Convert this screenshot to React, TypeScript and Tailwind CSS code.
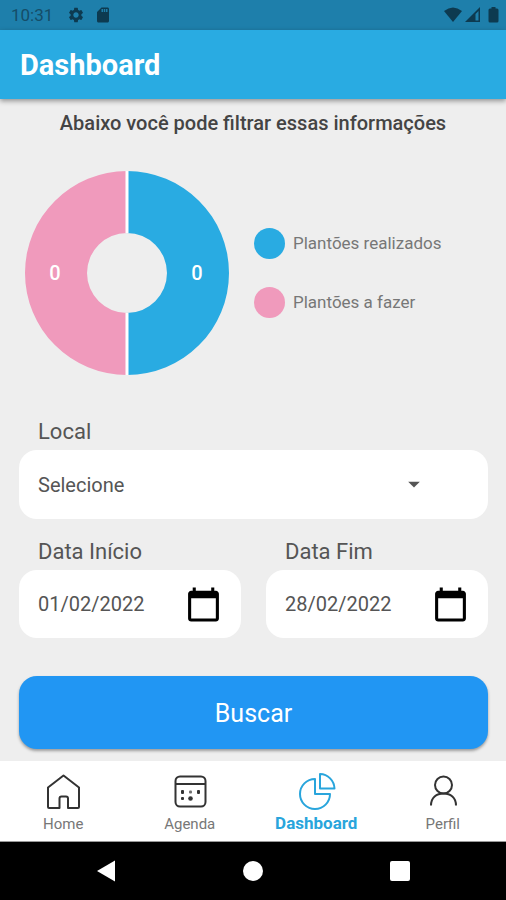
import { useState, type ReactNode } from "react";
import { MdArrowDropDown, MdCalendarToday, MdSdCard, MdSettings } from "react-icons/md";

function StatusBar() {
  return (
    <div className="flex h-[30px] items-center justify-between bg-[#1e7fab] pl-[11px] pr-[7px] text-[#0d3a50]">
      <div className="flex items-center">
        <span className="text-[17px] leading-5 text-[#154d68]">10:31</span>
        <MdSettings className="ml-[14px] size-[18px]" />
        <MdSdCard className="ml-[9px] size-[18px]" />
      </div>
      <div className="flex items-center">
        <svg className="h-4 w-[18px]" viewBox="0 0 18 16" fill="currentColor" aria-hidden="true">
          <path d="M0 4 Q9 -3 18 4 L9 15 Z" />
        </svg>
        <svg className="ml-[3px] h-4 w-[15px]" viewBox="0 0 15 16" aria-hidden="true">
          <path d="M0 15 L15 0 V15 Z" fill="currentColor" />
          <path d="M10.500 7 L13.500 4 V13.500 H10.500 Z" fill="#1e7fab" />
        </svg>
        <svg className="ml-[8px] h-4 w-[11px]" viewBox="0 0 11 16" fill="currentColor" aria-hidden="true">
          <path d="M3.500 0 H7.500 V1.500 H9 Q10.500 1.500 10.500 3 V14 Q10.500 15.500 9 15.500 H2 Q.5 15.500 .5 14 V3 Q.5 1.500 2 1.500 H3.500 Z" />
        </svg>
      </div>
    </div>
  );
}

function DonutChart() {
  return (
    <svg className="size-[204px] shrink-0" viewBox="0 0 204 204" role="img" aria-label="Plantões">
      <path d="M102 0 A102 102 0 0 1 102 204 V142 A40 40 0 0 0 102 62 Z" fill="#29abe2" />
      <path d="M102 0 A102 102 0 0 0 102 204 V142 A40 40 0 0 1 102 62 Z" fill="#f09abc" />
      <path d="M102 0 V62 M102 142 V204" stroke="#fff" strokeWidth="3" />
      <g fill="#fff" fontSize="20" fontWeight="500" textAnchor="middle">
        <text x="30" y="109">0</text>
        <text x="172" y="109">0</text>
      </g>
    </svg>
  );
}

function DateField({ id, label, initial }: { id: string; label: string; initial: string }) {
  const [value, setValue] = useState(initial);
  return (
    <div className="min-w-0 flex-1">
      <label htmlFor={id} className="block pl-[19px] text-[22px] leading-[26px] text-[#555]">
        {label}
      </label>
      <div className="mt-[5px] flex h-[68px] items-center rounded-[18px] bg-white px-[19px]">
        <input
          id={id}
          value={value}
          onChange={(e) => setValue(e.target.value)}
          className="w-full min-w-0 flex-1 bg-transparent text-[20px] leading-6 text-[#555] outline-none"
        />
        <button type="button" aria-label={`Escolher ${label}`} className="text-black">
          <MdCalendarToday className="size-[37px]" />
        </button>
      </div>
    </div>
  );
}

function NavItem({ label, active, children }: { label: string; active?: boolean; children: ReactNode }) {
  return (
    <a
      href="#"
      aria-current={active ? "page" : undefined}
      className={`flex flex-1 flex-col items-center pt-[10px] ${active ? "text-[#29a5dc]" : "text-[#333]"}`}
    >
      <svg
        className="size-10"
        viewBox="0 0 40 40"
        fill="none"
        stroke="currentColor"
        strokeWidth="2"
        strokeLinejoin="round"
        aria-hidden="true"
      >
        {children}
      </svg>
      <span className={active ? "mt-[2px] text-[17px] font-bold leading-5" : "mt-[3px] text-[15px] leading-5 text-[#777]"}>
        {label}
      </span>
    </a>
  );
}

export default function App() {
  return (
    <div className="flex min-h-screen flex-col bg-[#eeeeee] font-['Roboto',sans-serif]">
      <StatusBar />
      <header className="flex h-[69px] items-center bg-[#29abe2] px-5 shadow-[0_2px_5px_rgba(0,0,0,0.4)]">
        <h1 className="text-[29px] font-bold leading-9 text-white">Dashboard</h1>
      </header>

      <main className="flex flex-1 flex-col">
        <h2 className="mt-3 text-center text-[20px] font-medium leading-6 text-[#444]">
          Abaixo você pode filtrar essas informações
        </h2>

        <section className="mt-9 flex items-center gap-[25px] pl-[25px]">
          <DonutChart />
          <ul className="flex flex-col gap-7 text-[17px] leading-[31px] text-[#777]">
            <li className="flex items-center gap-2">
              <span className="size-[31px] rounded-full bg-[#29abe2]" />
              Plantões realizados
            </li>
            <li className="flex items-center gap-2">
              <span className="size-[31px] rounded-full bg-[#f09abc]" />
              Plantões a fazer
            </li>
          </ul>
        </section>

        <form className="mt-11 pl-[19px] pr-[18px]" onSubmit={(e) => e.preventDefault()}>
          <label htmlFor="local" className="block pl-[19px] text-[22px] leading-[26px] text-[#555]">
            Local
          </label>
          <div className="relative mt-[5px]">
            <select
              id="local"
              className="h-[69px] w-full appearance-none rounded-[18px] bg-white pl-[19px] pr-24 text-[20px] leading-6 text-[#555] outline-none"
            >
              <option>Selecione</option>
            </select>
            <MdArrowDropDown className="pointer-events-none absolute right-[60px] top-5 size-7 text-[#555]" />
          </div>

          <div className="mt-5 flex gap-[25px]">
            <DateField id="inicio" label="Data Início" initial="01/02/2022" />
            <DateField id="fim" label="Data Fim" initial="28/02/2022" />
          </div>

          <button
            type="submit"
            className="mt-[38px] h-[73px] w-full rounded-[18px] bg-[#2196f3] pt-[2px] text-[25px] leading-7 text-white shadow-[0_2px_3px_rgba(0,0,0,0.35)]"
          >
            Buscar
          </button>
        </form>
      </main>

      <nav className="flex h-[81px] border-b border-[#999] bg-white">
        <NavItem label="Home">
          <path d="M6 37 Q5 37 5 36 V16.500 L20.500 4.500 L36 16.500 V36 Q36 37 35 37 H25 V27.500 Q25 25.500 23 25.500 H18.500 Q16.500 25.500 16.500 27.500 V37 Z" />
        </NavItem>
        <NavItem label="Agenda">
          <rect x="5.500" y="5.500" width="30" height="30" rx="4.500" />
          <path d="M5.500 13 H35.500" />
          <g fill="currentColor" stroke="none">
            <rect x="11" y="19" width="3" height="4" rx="1" />
            <rect x="19" y="19.500" width="3" height="3" rx="1" fillOpacity="0.7" />
            <rect x="27" y="19" width="3" height="4" rx="1" />
            <rect x="11" y="26" width="3" height="3" rx="1" />
            <circle cx="20.500" cy="27.500" r="2.300" />
          </g>
        </NavItem>
        <NavItem label="Dashboard" active>
          <path d="M19 8 A15 15 0 1 0 34 23 H19 Z" />
          <path d="M24 3 A15 15 0 0 1 38.500 17.500 H24 Z" />
        </NavItem>
        <NavItem label="Perfil">
          <circle cx="20.500" cy="14" r="8.500" />
          <path d="M8 34.500 C8 26.500 13.500 22.500 20.500 22.500 S33 26.500 33 34.500" />
        </NavItem>
      </nav>

      <div className="flex h-[58px] items-center justify-around bg-black px-[33px]">
        <button type="button" aria-label="Voltar">
          <svg className="h-[22px] w-5" viewBox="0 0 20 22" fill="#fff">
            <path d="M1 11 L19 .5 V21.500 Z" />
          </svg>
        </button>
        <button type="button" aria-label="Início" className="size-5 rounded-full bg-white" />
        <button type="button" aria-label="Recentes" className="size-5 rounded-[2px] bg-white" />
      </div>
    </div>
  );
}
